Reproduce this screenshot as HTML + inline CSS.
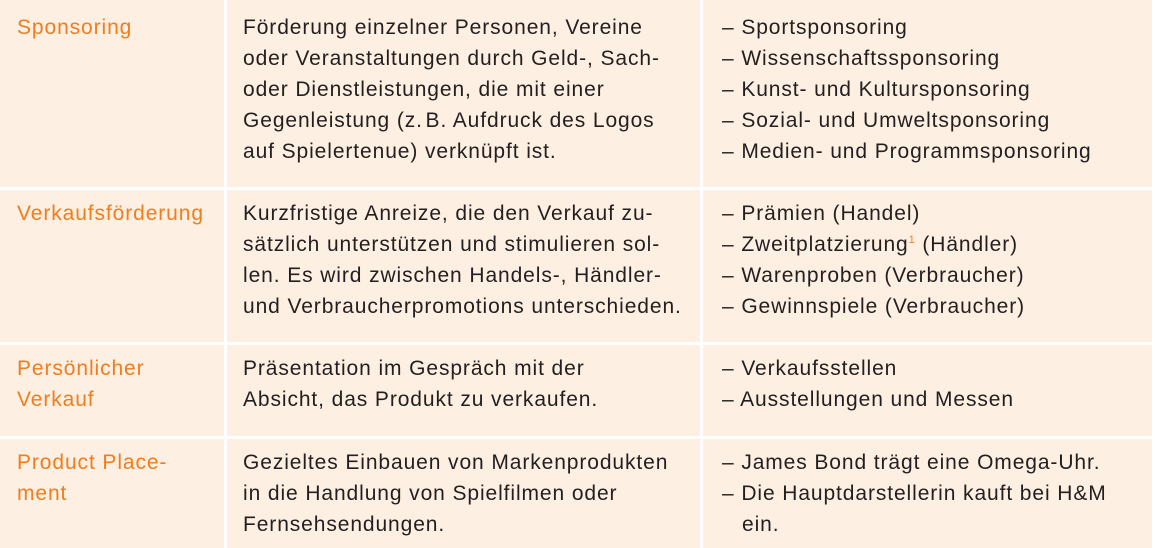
<!DOCTYPE html>
<html><head><meta charset="utf-8"><style>
body{margin:0;width:1155px;height:548px;background:#fff;position:relative;overflow:hidden;font-family:"Liberation Sans",Arial,sans-serif;font-size:21px;letter-spacing:0.9px;color:#231f20}
.bg{position:absolute;left:0;top:0;width:1152px;height:548px;background:#fdefe1}
.v,.h{position:absolute;background:#fff}
.v{top:0;height:548px;width:3px}
.h{left:0;width:1152px;height:3px}
.t{position:absolute;line-height:31px;white-space:nowrap}
.o{color:#f07d1e}
sup{font-size:11px;color:#f07d1e;vertical-align:8px;line-height:0}
</style></head><body>
<div class="bg"></div>
<div class="v" style="left:224px"></div>
<div class="v" style="left:700px"></div>
<div class="h" style="top:187px"></div>
<div class="h" style="top:342px"></div>
<div class="h" style="top:436px"></div>

<div class="t o" style="left:17px;top:12px">Sponsoring</div>
<div class="t" style="left:243px;top:12px">Förderung einzelner Personen, Vereine<br>oder Veranstaltungen durch Geld-, Sach-<br>oder Dienstleistungen, die mit einer<br>Gegenleistung (z.&#8202;B. Aufdruck des Logos<br>auf Spielertenue) verknüpft ist.</div>
<div class="t" style="left:722px;top:12px">– Sportsponsoring<br>– Wissenschaftssponsoring<br>– Kunst- und Kultursponsoring<br>– Sozial- und Umweltsponsoring<br>– Medien- und Programmsponsoring</div>

<div class="t o" style="left:17px;top:198px">Verkaufsförderung</div>
<div class="t" style="left:243px;top:198px">Kurzfristige Anreize, die den Verkauf zu-<br>sätzlich unterstützen und stimulieren sol-<br>len. Es wird zwischen Handels-, Händler-<br>und Verbraucherpromotions unterschieden.</div>
<div class="t" style="left:722px;top:198px">– Prämien (Handel)<br>– Zweitplatzierung<sup>1</sup> (Händler)<br>– Warenproben (Verbraucher)<br>– Gewinnspiele (Verbraucher)</div>

<div class="t o" style="left:17px;top:353px">Persönlicher<br>Verkauf</div>
<div class="t" style="left:243px;top:353px">Präsentation im Gespräch mit der<br>Absicht, das Produkt zu verkaufen.</div>
<div class="t" style="left:722px;top:353px">– Verkaufsstellen<br>– Ausstellungen und Messen</div>

<div class="t o" style="left:17px;top:447px">Product Place-<br>ment</div>
<div class="t" style="left:243px;top:447px">Gezieltes Einbauen von Markenprodukten<br>in die Handlung von Spielfilmen oder<br>Fernsehsendungen.</div>
<div class="t" style="left:722px;top:447px">– James Bond trägt eine Omega-Uhr.<br>– Die Hauptdarstellerin kauft bei H&amp;M</div>
<div class="t" style="left:742px;top:509px">ein.</div>
</body></html>
